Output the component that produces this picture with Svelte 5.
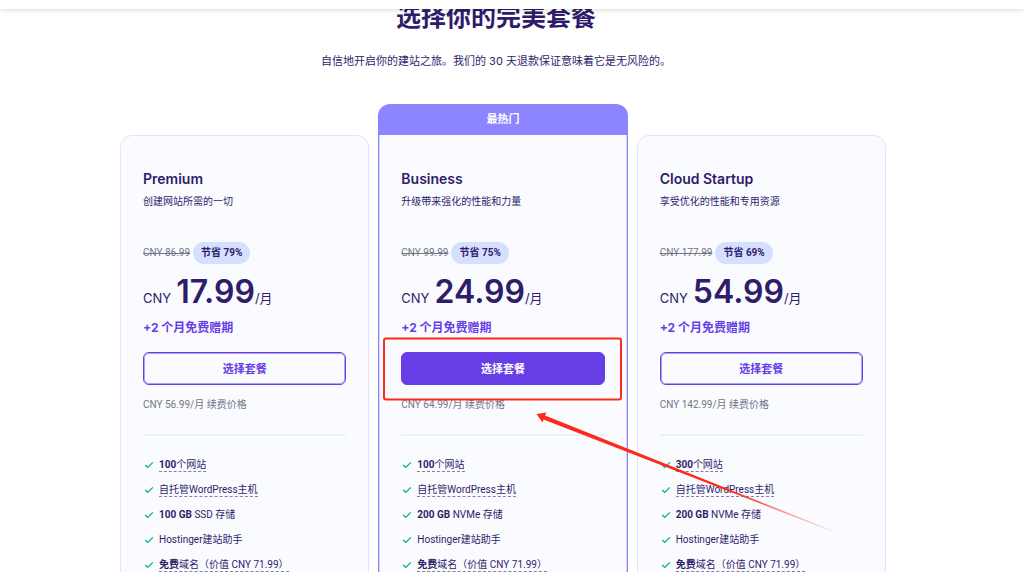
<script lang="ts">
  interface Feature {
    strong?: string;
    text: string;
    hint?: boolean;
  }

  interface Plan {
    name: string;
    tagline: string;
    oldPrice: string;
    discount: string;
    price: string;
    renewal: string;
    popular?: boolean;
    features: Feature[];
  }

  // features are nearly the same in every plan, only sites and storage change
  function featureList(sites: string, size: string, disk: string): Feature[] {
    return [
      { strong: sites, text: '个网站', hint: true },
      { text: '自托管WordPress主机', hint: true },
      { strong: size, text: ' ' + disk + ' 存储' },
      { text: 'Hostinger建站助手' },
      { strong: '免费', text: '域名（价值 CNY 71.99）', hint: true }
    ];
  }

  const plans: Plan[] = [
    {
      name: 'Premium',
      tagline: '创建网站所需的一切',
      oldPrice: '86.99',
      discount: '79%',
      price: '17.99',
      renewal: '56.99',
      features: featureList('100', '100 GB', 'SSD')
    },
    {
      name: 'Business',
      tagline: '升级带来强化的性能和力量',
      oldPrice: '99.99',
      discount: '75%',
      price: '24.99',
      renewal: '64.99',
      popular: true,
      features: featureList('100', '200 GB', 'NVMe')
    },
    {
      name: 'Cloud Startup',
      tagline: '享受优化的性能和专用资源',
      oldPrice: '177.99',
      discount: '69%',
      price: '54.99',
      renewal: '142.99',
      features: featureList('300', '200 GB', 'NVMe')
    }
  ];
</script>

<div class="page">
  <!-- bottom edge of the sticky nav -->
  <div class="topbar"></div>

  <header class="intro">
    <h1>选择你的完美套餐</h1>
    <p>自信地开启你的建站之旅。我们的 30 天退款保证意味着它是无风险的。</p>
  </header>

  <main class="plans">
    {#each plans as plan}
      <section class="plan" class:popular={plan.popular}>
        {#if plan.popular}
          <div class="banner">最热门</div>
        {/if}
        <div class="card">
          <h2>{plan.name}</h2>
          <p class="tagline">{plan.tagline}</p>
          <div class="saving">
            <s>CNY {plan.oldPrice}</s>
            <span class="pill">节省 {plan.discount}</span>
          </div>
          <p class="price"><span>CNY</span><strong>{plan.price}</strong><span>/月</span></p>
          <p class="bonus">+2 个月免费赠期</p>
          <button class="choose" type="button">选择套餐</button>
          <p class="renewal">CNY {plan.renewal}/月 续费价格</p>
          <ul class="features">
            {#each plan.features as f}
              <li>
                <svg class="check" viewBox="0 0 10 10" aria-hidden="true">
                  <path d="M1.2 5 L3.8 7.4 L8.8 2.4" />
                </svg>
                <span class:hint={f.hint}>{#if f.strong}<b>{f.strong}</b>{/if}{f.text}</span>
              </li>
            {/each}
          </ul>
        </div>
      </section>
    {/each}

    <!-- red marker and arrow on the Business button -->
    <svg class="marker" viewBox="0 0 766 468" aria-hidden="true">
      <defs>
        <linearGradient id="tail" gradientUnits="userSpaceOnUse" x1="417" y1="310" x2="712" y2="427">
          <stop offset="0" stop-color="#fd2a1c" />
          <stop offset="0.65" stop-color="#fd2a1c" />
          <stop offset="1" stop-color="#fd2a1c" stop-opacity="0.1" />
        </linearGradient>
      </defs>
      <rect x="264" y="234.5" width="237" height="61" rx="2" />
      <path fill="url(#tail)" d="M416.5 310 L426.5 308.5 L425 311.5 L712 426.5 L712 427.5 L423.5 315.5 L422.5 318.5 Z" />
    </svg>
  </main>
</div>

<style>
  :global(body) {
    margin: 0;
    background: #fff;
  }

  .page {
    box-sizing: border-box;
    height: 100vh;
    padding-right: 18px;
    overflow: hidden;
    color: #2f1c6a;
    font-family: Inter, 'Noto Sans CJK SC', sans-serif;
  }

  .topbar {
    position: fixed;
    top: 0;
    left: 0;
    right: 0;
    height: 9px;
    background: #fff;
    box-shadow: 0 1px 5px rgba(0, 0, 0, 0.15);
    z-index: 5;
  }

  h1,
  h2,
  p,
  ul {
    margin: 0;
    padding: 0;
  }

  .intro {
    padding: 1px 14px 0 0;
    text-align: center;
  }

  .intro h1 {
    font-size: 25px;
    line-height: 32px;
    font-weight: 700;
  }

  .intro p {
    margin-top: 18px;
    font-size: 11px;
    line-height: 20px;
  }

  .plans {
    position: relative;
    display: grid;
    grid-template-columns: repeat(3, 1fr);
    gap: 9px;
    align-items: end;
    max-width: 766px;
    margin: 33px auto 0;
  }

  .card {
    padding: 33px 22px 40px;
    background: #fafbff;
    border: 1px solid #dfe4ff;
    border-radius: 12px;
  }

  .popular .card {
    border-color: #8c85ff;
    border-top: 0;
    border-top-left-radius: 0;
    border-top-right-radius: 0;
    padding-top: 34px;
    box-shadow: inset 1px 0 #d5d2ff, inset -1px 0 #d5d2ff;
  }

  .banner {
    height: 31px;
    background: #8c85ff;
    border-radius: 12px 12px 0 0;
    color: #fff;
    font-size: 11px;
    font-weight: 700;
    line-height: 30px;
    text-align: center;
  }

  h2 {
    font-size: 14px;
    line-height: 20px;
    font-weight: 600;
  }

  .tagline {
    margin-top: 4px;
    font-size: 10px;
    line-height: 16px;
  }

  .saving,
  .renewal,
  .features {
    font-family: Roboto, 'Noto Sans CJK SC', sans-serif;
    font-size: 10px;
  }

  .saving {
    display: flex;
    align-items: center;
    gap: 3px;
    margin-top: 33px;
    line-height: 22px;
  }

  .saving s {
    color: #727586;
  }

  .pill {
    padding: 0 8px;
    border-radius: 11px;
    background: #d5dfff;
    font-weight: 700;
  }

  .price {
    display: flex;
    align-items: baseline;
    height: 40px;
    margin-top: 8px;
    font-size: 13px;
    line-height: 40px;
  }

  .price strong {
    margin-left: 5px;
    font-size: 32px;
    font-weight: 600;
  }

  .bonus {
    margin-top: 6px;
    color: #673de6;
    font-size: 12px;
    line-height: 20px;
    font-weight: 700;
  }

  .choose {
    display: block;
    width: 100%;
    height: 33px;
    margin-top: 14px;
    padding: 0 0 1px;
    background: #fafbff;
    border: 1px solid #673de6;
    border-radius: 6px;
    box-shadow: inset 0 0 0 1px #b3a0f2;
    color: #673de6;
    font-family: inherit;
    font-size: 11px;
    font-weight: 600;
    cursor: pointer;
  }

  .popular .choose {
    background: #673de6;
    box-shadow: none;
    color: #fff;
    font-weight: 700;
  }

  .renewal {
    margin-top: 12px;
    color: #727586;
    line-height: 16px;
  }

  .features {
    margin-top: 21px;
    padding-top: 16px;
    border-top: 2px solid #ebefff;
    list-style: none;
  }

  .features li {
    display: flex;
    align-items: center;
    gap: 5px;
    height: 25px;
    padding-left: 1px;
    line-height: 13px;
    white-space: nowrap;
  }

  .check {
    width: 10px;
    height: 10px;
    fill: none;
    stroke: #00b090;
    stroke-width: 1.3;
  }

  .hint {
    border-bottom: 1px dashed #8681a3;
  }

  .marker {
    position: absolute;
    top: 0;
    left: 0;
    width: 766px;
    height: 468px;
    pointer-events: none;
  }

  .marker rect {
    fill: none;
    stroke: #fd2a1c;
    stroke-width: 2;
  }
</style>
